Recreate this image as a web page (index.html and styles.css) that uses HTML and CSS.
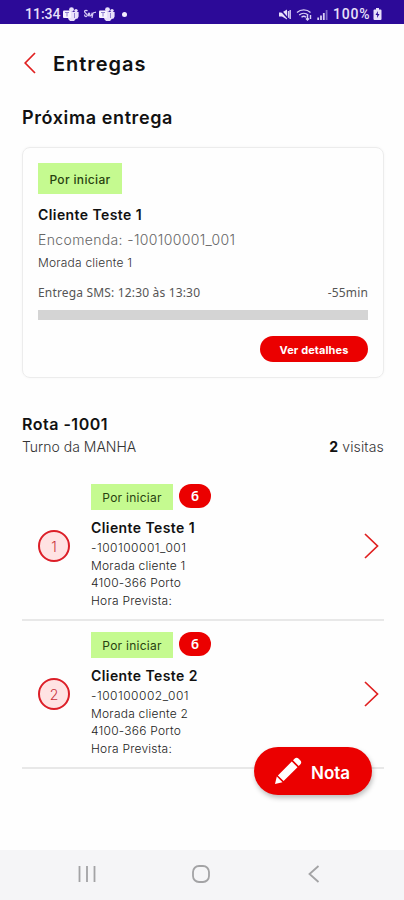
FILE: index.html
```html
<!DOCTYPE html>
<html lang="pt">
<head>
    <meta charset="UTF-8">
    <meta name="viewport" content="width=device-width, initial-scale=1.0">
    <title>Entregas</title>
    <link rel="stylesheet" href="styles.css">
</head>
<body>
    <div class="status-bar">
        <div class="status-left">
            <span class="clock">11:34</span>
            <svg class="teams" width="16" height="14" viewBox="0 0 16 14">
                <circle cx="8.5" cy="2.6" r="2.4"/><circle cx="13" cy="3.6" r="1.7"/>
                <path d="M5 5h10.6v4.500a3 3 0 0 1-3 2.500A4 4 0 0 1 5 11z"/>
                <rect class="plate" x="0" y="3.5" width="8" height="7.5" rx="1"/>
                <path class="mark" d="M2 5.500h4M4 5.500v4M11.500 6v5"/>
            </svg>
            <svg class="scribble" width="13" height="10" viewBox="0 0 13 10">
                <path d="M4.500 2C3 .5 .5 2 2 3.500s3 2 2 3.500-3 0-2-1.500M5 7c2-1 2-3 1-3s-1 3 1 3 2-3 1.500-3M9 9l1-5c1-1 2 0 3-1"/>
            </svg>
            <svg class="teams" width="16" height="14" viewBox="0 0 16 14">
                <circle cx="8.5" cy="2.6" r="2.4"/><circle cx="13" cy="3.6" r="1.7"/>
                <path d="M5 5h10.6v4.500a3 3 0 0 1-3 2.500A4 4 0 0 1 5 11z"/>
                <rect class="plate" x="0" y="3.5" width="8" height="7.5" rx="1"/>
                <path class="mark" d="M2 5.500h4M4 5.500v4M11.500 6v5"/>
            </svg>
            <span class="dot"></span>
        </div>
        <div class="status-right">
            <svg class="mute" width="12" height="11" viewBox="0 0 12 11">
                <path class="fill" d="M0 3.500h3L8 .5v10L3 7.500H0z"/>
                <path class="line" d="M9.500 2v7M11.200 1v9"/>
                <path class="cut" d="M1 .5l8 9"/>
            </svg>
            <svg class="wifi" width="17" height="13" viewBox="0 0 17 13">
                <path d="M1 4.500a10 10 0 0 1 13.500 0M3.200 7a7 7 0 0 1 9 0M5.500 9.200a3.600 3.600 0 0 1 4.500 0"/>
                <path d="M11.500 7v5M10 10.500l1.500 1.500 1.500-1.500M14.500 11V7"/>
            </svg>
            <svg class="signal" width="11" height="11" viewBox="0 0 11 11">
                <path d="M1.200 11V8.500M4 11V6.500M6.800 11V4"/>
                <path class="weak" d="M9.600 11V1"/>
            </svg>
            <span class="battery-text">100%</span>
            <svg class="battery" width="9" height="12" viewBox="0 0 9 12">
                <path class="fill" d="M3 0h3v1.500h1.500a1 1 0 0 1 1 1V11a1 1 0 0 1-1 1h-6a1 1 0 0 1-1-1V2.500a1 1 0 0 1 1-1H3z"/>
                <path class="bolt" d="M5 3L2.500 7h1.700L4 10l2.500-4H4.800z"/>
            </svg>
        </div>
    </div>

    <header class="header">
        <svg class="back" width="12" height="22" viewBox="0 0 12 22"><path d="M11 1L1.200 11 11 21"/></svg>
        <h1>Entregas</h1>
    </header>

    <main>
        <h2>Próxima entrega</h2>
        <section class="card">
            <span class="badge badge-large">Por iniciar</span>
            <h3 class="client">Cliente Teste 1</h3>
            <p class="order">Encomenda: -100100001_001</p>
            <p class="address">Morada cliente 1</p>
            <div class="schedule">
                <span class="window">Entrega SMS: 12:30 às 13:30</span>
                <span class="remaining">-55min</span>
            </div>
            <div class="progress"></div>
            <button class="details">Ver detalhes</button>
        </section>

        <section class="route">
            <h2 class="route-title">Rota -1001</h2>
            <div class="route-info">
                <span class="shift">Turno da MANHA</span>
                <span class="visits"><b>2</b> visitas</span>
            </div>
        </section>

        <ul class="stops">
            <li class="stop">
                <span class="number">1</span>
                <div class="stop-body">
                    <div class="tags"><span class="badge">Por iniciar</span><span class="count">6</span></div>
                    <h3 class="client">Cliente Teste 1</h3>
                    <p class="code">-100100001_001</p>
                    <p class="street">Morada cliente 1</p>
                    <p class="zip">4100-366 Porto</p>
                    <p class="hour">Hora Prevista:</p>
                </div>
                <svg class="arrow" width="15" height="26" viewBox="0 0 15 26"><path d="M1 1l12.500 12L1 25"/></svg>
            </li>
            <li class="stop">
                <span class="number">2</span>
                <div class="stop-body">
                    <div class="tags"><span class="badge">Por iniciar</span><span class="count">6</span></div>
                    <h3 class="client">Cliente Teste 2</h3>
                    <p class="code">-100100002_001</p>
                    <p class="street">Morada cliente 2</p>
                    <p class="zip">4100-366 Porto</p>
                    <p class="hour">Hora Prevista:</p>
                </div>
                <svg class="arrow" width="15" height="26" viewBox="0 0 15 26"><path d="M1 1l12.500 12L1 25"/></svg>
            </li>
        </ul>
    </main>

    <button class="note">
        <svg width="28" height="28" viewBox="0 0 28 28">
            <path d="M1 27l1.800-7.500 5.700 5.700zM3.900 18.400L17.800 4.500l5.700 5.700L9.600 24.100zM19 3.300l1.500-1.500a3 3 0 0 1 4.200 0l1.500 1.500a3 3 0 0 1 0 4.200L24.700 9z"/>
        </svg>
        <span>Nota</span>
    </button>

    <nav class="nav-bar">
        <svg width="18" height="18" viewBox="0 0 18 18"><path d="M1.500 1v16M9 1v16M16.500 1v16"/></svg>
        <svg width="18" height="18" viewBox="0 0 18 18"><rect x="1" y="1" width="16" height="16" rx="6"/></svg>
        <svg width="18" height="18" viewBox="0 0 18 18"><path d="M13.500 1L4.500 9l9 8"/></svg>
    </nav>
</body>
</html>
```
FILE: styles.css
```css
* {
    box-sizing: border-box;
}
body, html {
    height: 100%;
    margin: 0;
    overflow: hidden;
}
body {
    display: flex;
    flex-direction: column;
    background-color: #fefefe;
    color: #111;
    font-family: Inter, "Noto Sans", sans-serif;
}
h1, h2, h3, p, ul {
    margin: 0;
    padding: 0;
    white-space: nowrap;
}
svg {
    display: block;
    flex: none;
}
button {
    border: none;
    font-family: inherit;
    color: white;
    background-color: #eb0000;
}

/* Status bar */
.status-bar {
    height: 24px;
    padding: 4px 22px 0 25px;
    display: flex;
    justify-content: space-between;
    background-color: #2c0a98;
    color: #e8e0fa;
    fill: #e8e0fa;
    font: 500 14px/20px Roboto, sans-serif;
}
.status-left, .status-right {
    display: flex;
    align-items: center;
}
.clock {
    width: 38px;
}
.plate {
    fill: #f7f3ff;
}
.mark {
    fill: none;
    stroke: #8f80d0;
    stroke-width: 1;
}
.scribble {
    margin: 0 3px 0 4px;
    fill: none;
    stroke: #d5caf5;
    stroke-width: 1.2;
}
.dot {
    width: 5px;
    height: 5px;
    margin-left: 7px;
    border-radius: 50%;
    background-color: #f3eeff;
}
.mute .line, .wifi path, .signal path {
    fill: none;
    stroke: #d8cff5;
    stroke-width: 1.4;
}
.mute .cut {
    stroke: #2c0a98;
    stroke-width: 1.5;
}
.wifi {
    margin-left: 5px;
}
.signal {
    margin: 0 5px 0 4px;
}
.signal path {
    stroke-width: 1.8;
}
.signal .weak {
    stroke: #7b66c6;
}
.battery-text {
    width: 39px;
    letter-spacing: 0.8px;
}
.battery {
    margin-left: 1px;
}
.bolt {
    fill: #2c0a98;
}

/* Header */
.header {
    height: 82px;
    padding: 0 0 5px 24px;
    display: flex;
    align-items: center;
    gap: 17px;
}
.back path, .arrow path {
    fill: none;
    stroke: #e02020;
    stroke-width: 1.7;
}
h1 {
    padding-top: 3px;
    font-size: 20px;
    line-height: 26px;
    font-weight: 600;
    letter-spacing: 0.95px;
}
main {
    flex: 1;
    padding: 0 20px 0 22px;
}
h2 {
    font-size: 18px;
    line-height: 24px;
    font-weight: 600;
    letter-spacing: 0.6px;
}

/* Next delivery */
.card {
    height: 231px;
    margin-top: 17px;
    padding: 15px 15px 0;
    display: flex;
    flex-direction: column;
    align-items: flex-start;
    border: 1px solid #ececec;
    border-radius: 8px;
    box-shadow: 0 0 3px rgba(0, 0, 0, 0.04);
}
.badge {
    width: 82px;
    height: 26px;
    background-color: #c5fa90;
    color: #28420f;
    font-size: 12px;
    line-height: 27px;
    letter-spacing: 0.25px;
    text-align: center;
    white-space: nowrap;
}
.badge-large {
    width: 84px;
    height: 31px;
    line-height: 33px;
    font-weight: 500;
    letter-spacing: 0.35px;
}
.client {
    font-size: 14px;
    line-height: 20px;
    font-weight: 600;
    letter-spacing: 0.42px;
}
.card .client {
    margin-top: 11px;
}
.order {
    margin-top: 5px;
    font-size: 14px;
    line-height: 20px;
    font-weight: 300;
    letter-spacing: 0.36px;
    color: #666;
}
.address {
    margin-top: 4px;
    font-size: 12px;
    line-height: 18px;
    font-weight: 300;
    letter-spacing: 0.2px;
    color: #333;
}
.schedule {
    width: 100%;
    margin-top: 11px;
    display: flex;
    justify-content: space-between;
    font: 12px/20px "Noto Sans", sans-serif;
    letter-spacing: 0.17px;
    color: #555;
}
.progress {
    width: 100%;
    height: 10px;
    margin-top: 7px;
    background-color: #d4d4d4;
}
.details {
    width: 108px;
    height: 26px;
    margin-top: 16px;
    padding: 2px 0 0;
    align-self: flex-end;
    border-radius: 13px;
    font-size: 11px;
    font-weight: 700;
    letter-spacing: 0.1px;
}

/* Route */
.route {
    margin-top: 34px;
}
.route-title {
    font-size: 16px;
    line-height: 24px;
    letter-spacing: 0.5px;
}
.route-info {
    display: flex;
    justify-content: space-between;
    font-size: 14px;
    line-height: 22px;
    font-weight: 300;
    color: #333;
}
.visits {
    letter-spacing: 0.15px;
}
.visits b {
    font-weight: 700;
    color: #111;
}
.stops {
    margin-top: 15px;
    list-style: none;
}
.stop {
    height: 148px;
    padding: 11px 5px 0 16px;
    display: flex;
    border-bottom: 2px solid #e8e8e8;
}
.number {
    width: 32px;
    height: 32px;
    margin: 46px 21px 0 0;
    border: 2px solid #dc1f28;
    border-radius: 50%;
    background-color: #ffe3e3;
    color: #c8323a;
    font-size: 14px;
    line-height: 29px;
    font-weight: 300;
    text-align: center;
}
.stop-body {
    flex: 1;
}
.tags {
    display: flex;
    gap: 6px;
}
.count {
    width: 32px;
    height: 24px;
    border-radius: 12px;
    background-color: #eb0000;
    color: white;
    font: 600 14px/24px "Noto Sans", sans-serif;
    text-align: center;
}
.stop .client {
    margin-top: 8px;
}
.code, .street, .zip, .hour {
    font-size: 12px;
    line-height: 17.5px;
    font-weight: 300;
    letter-spacing: 0.22px;
    color: #222;
}
.code {
    padding-top: 1px;
    letter-spacing: 0.5px;
}
.arrow {
    margin-top: 49px;
}

/* Floating action */
.note {
    position: absolute;
    left: 254px;
    top: 747px;
    width: 118px;
    height: 48px;
    padding: 0 0 0 20px;
    display: flex;
    align-items: center;
    gap: 9px;
    border-radius: 24px;
    box-shadow: 1px 3px 5px rgba(0, 0, 0, 0.25);
    fill: white;
    font-size: 17px;
    font-weight: 600;
}
.note span {
    padding-top: 3px;
}

/* Android navigation */
.nav-bar {
    height: 50px;
    padding: 0 81px 2px 78px;
    display: flex;
    align-items: center;
    justify-content: space-between;
    background-color: #f5f5f7;
    fill: none;
    stroke: #a3a3a5;
    stroke-width: 1.8;
}
```
